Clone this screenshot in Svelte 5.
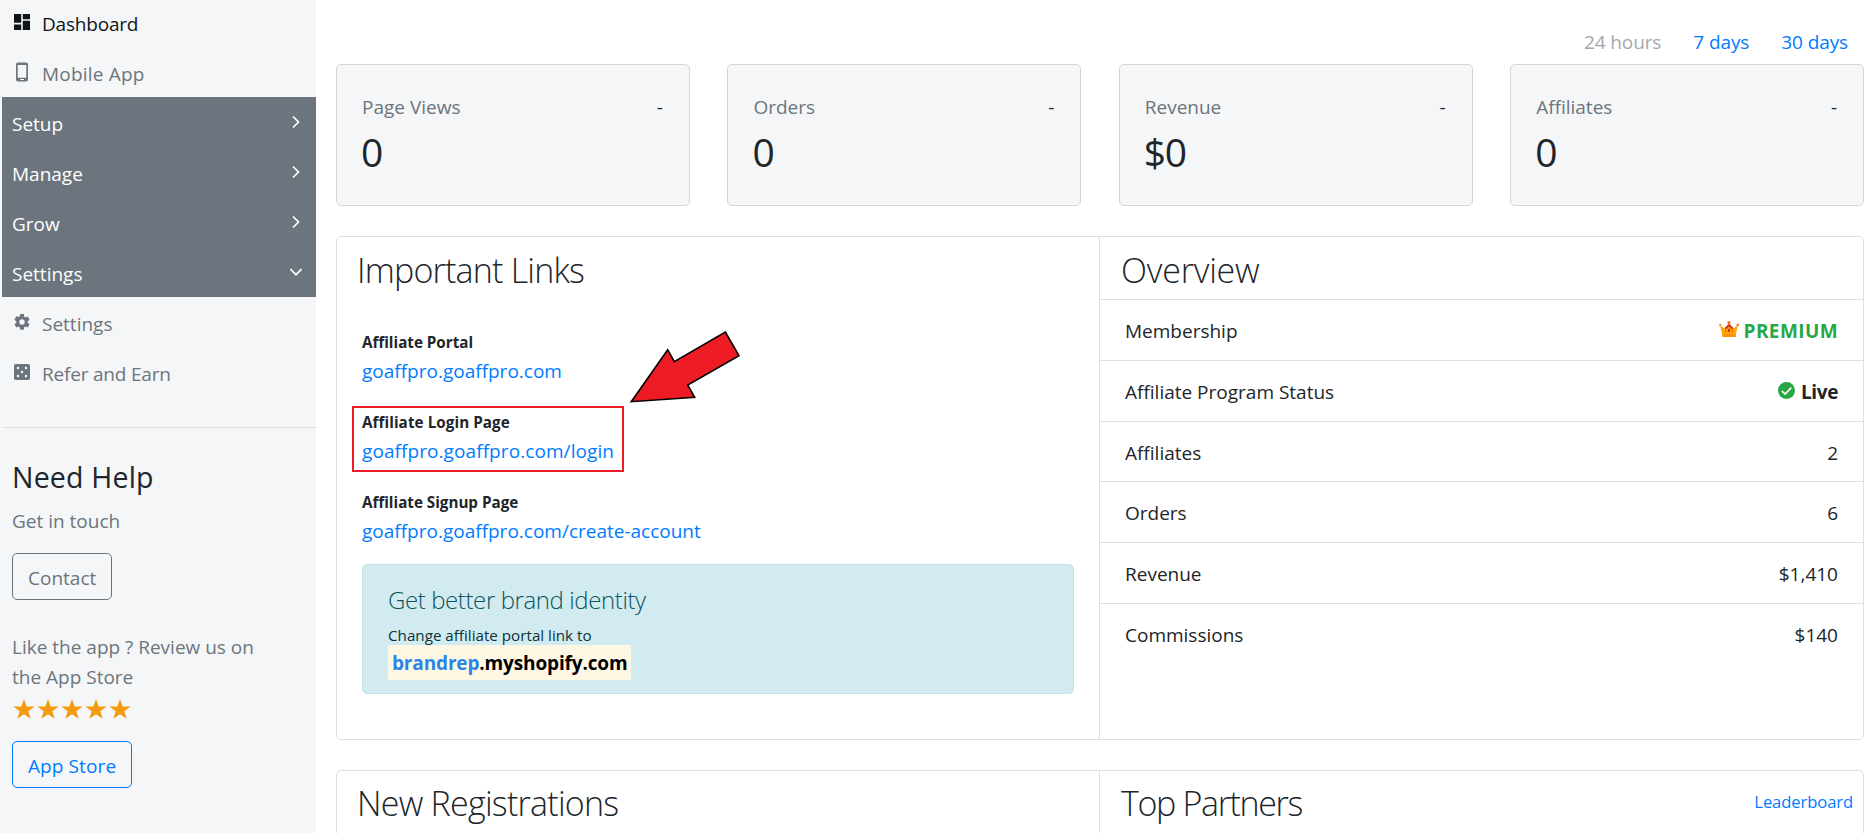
<script>
  const groups = [
    { label: 'Setup', open: false },
    { label: 'Manage', open: false },
    { label: 'Grow', open: false },
    { label: 'Settings', open: true }
  ];
  const stats = [
    { label: 'Page Views', value: '0' },
    { label: 'Orders', value: '0' },
    { label: 'Revenue', value: '$0' },
    { label: 'Affiliates', value: '0' }
  ];
  const links = [
    { title: 'Affiliate Portal', url: 'goaffpro.goaffpro.com' },
    { title: 'Affiliate Login Page', url: 'goaffpro.goaffpro.com/login', marked: true },
    { title: 'Affiliate Signup Page', url: 'goaffpro.goaffpro.com/create-account' }
  ];
  const overview = [
    { label: 'Membership', value: 'PREMIUM', kind: 'premium' },
    { label: 'Affiliate Program Status', value: 'Live', kind: 'live' },
    { label: 'Affiliates', value: '2' },
    { label: 'Orders', value: '6' },
    { label: 'Revenue', value: '$1,410' },
    { label: 'Commissions', value: '$140' }
  ];
</script>

<div class="app">
  <aside>
    <nav>
      <a class="item active" href="#dashboard">
        <svg class="icon" viewBox="0 0 16 16"><path d="M0 0h7.2v8.8H0zM8.8 0H16v5.2H8.8zM0 10.4h7.2V16H0zM8.8 6.8H16V16H8.8z" /></svg>
        <span class="tight">Dashboard</span>
      </a>
      <a class="item" href="#mobile">
        <svg class="icon phone" viewBox="0 0 16 20"><path fill-rule="evenodd" d="M4 .5h8a2 2 0 0 1 2 2v15a2 2 0 0 1-2 2H4a2 2 0 0 1-2-2v-15a2 2 0 0 1 2-2zM3.7 3v12.8h8.6V3zM6 17v1.1h4V17z" /></svg>
        <span class="wide">Mobile App</span>
      </a>
      <div class="groups">
        {#each groups as g}
          <a class="group" href="#{g.label}">
            <span>{g.label}</span>
            <svg class="chev" viewBox="0 0 14 14"><path d={g.open ? 'M1.5 4.2 7 9.8l5.5-5.6' : 'M4 1.5 9.5 7 4 12.5'} /></svg>
          </a>
        {/each}
      </div>
      <a class="item" href="#settings">
        <svg class="icon" viewBox="2 2 20 20"><path d="M19.14 12.94c.04-.3.06-.61.06-.94s-.02-.64-.07-.94l2.03-1.58a.49.49 0 0 0 .12-.61l-1.92-3.32a.488.488 0 0 0-.59-.22l-2.39.96c-.5-.38-1.03-.7-1.62-.94L14.4 2.2a.484.484 0 0 0-.48-.2h-3.84c-.24 0-.43.17-.47.41l-.36 2.54c-.59.24-1.13.57-1.62.94l-2.39-.96c-.22-.08-.47 0-.59.22L2.74 8.87c-.12.21-.08.47.12.61l2.03 1.58c-.05.3-.09.63-.09.94s.02.64.07.94l-2.03 1.58a.49.49 0 0 0-.12.61l1.92 3.32c.12.22.37.29.59.22l2.39-.96c.5.38 1.03.7 1.62.94l.36 2.54c.05.24.24.41.48.41h3.84c.24 0 .44-.17.47-.41l.36-2.54c.59-.24 1.13-.56 1.62-.94l2.39.96c.22.08.47 0 .59-.22l1.92-3.32a.49.49 0 0 0-.12-.61zM12 15.4A3.4 3.4 0 1 1 12 8.6a3.4 3.4 0 0 1 0 6.8z" /></svg>
        <span>Settings</span>
      </a>
      <a class="item" href="#refer">
        <svg class="icon" viewBox="0 0 16 16">
          <rect width="16" height="16" rx="1.8" />
          <g fill="#f4f6f8"><circle cx="4" cy="4" r="1.25" /><circle cx="12" cy="4" r="1.25" /><circle cx="8" cy="8" r="1.25" /><circle cx="4" cy="12" r="1.25" /><circle cx="12" cy="12" r="1.25" /></g>
        </svg>
        <span class="refer">Refer and Earn</span>
      </a>
    </nav>
    <section class="help">
      <h4>Need Help</h4>
      <p>Get in touch</p>
      <a class="btn" href="#contact">Contact</a>
      <p class="review">Like the app ? Review us on<br />the App Store</p>
      <div class="stars">
        {#each [1, 2, 3, 4, 5] as n (n)}
          <svg viewBox="0 0 24 20"><path d="M12 0l2.7 7.5h8l-6.4 4.7 2.4 7.6L12 15.2l-6.7 4.6 2.4-7.6L1.3 7.5h8z" /></svg>
        {/each}
      </div>
      <a class="btn blue" href="#store">App Store</a>
    </section>
  </aside>

  <main>
    <div class="ranges">
      <span>24 hours</span>
      <a href="#7">7 days</a>
      <a href="#30">30 days</a>
    </div>

    <div class="stats">
      {#each stats as s}
        <div class="stat">
          <div class="top"><span>{s.label}</span><b>-</b></div>
          <div class="num">{s.value}</div>
        </div>
      {/each}
    </div>

    <div class="panel first">
      <section class="left">
        <h2 class="h-links">Important Links</h2>
        <div class="links">
          {#each links as l}
            <div class="link" class:marked={l.marked}>
              <strong>{l.title}</strong>
              <a href="#{l.url}">{l.url}</a>
            </div>
          {/each}
          <div class="alert">
            <h5>Get better brand identity</h5>
            <small>Change affiliate portal link to</small>
            <mark><i>brandrep</i>.myshopify.com</mark>
          </div>
        </div>
        <svg class="arrow" viewBox="0 0 120 80"><path d="M99.3 6 113 29.7 61.7 59 68.7 71.3 5.3 75.7 41.7 23.7 48.3 35.7z" /></svg>
      </section>
      <section class="right">
        <h2 class="lined">Overview</h2>
        {#each overview as o}
          <div class="row">
            <span>{o.label}</span>
            <span class="val {o.kind ?? ''}">
              {#if o.kind === 'premium'}
                <svg class="crown" viewBox="0 0 20 16">
                  <path fill="#ee5a1c" d="M5 8.5 10 2l5 6.500-3 2-2-3-2 3z" />
                  <path fill="#ffa800" d="M1 4.200 6 7.800l4-2.600 4 2.600 5-3.600L16.700 14H3.300z" />
                  <path fill="#d9321a" d="M5.500 7 10 3.400 14.500 7 13 8.400 10 5.600 7 8.400z" />
                  <path fill="#ff8f0a" d="M3.300 13h13.400v3H3.300z" />
                  <circle cx="1.300" cy="4" r="1.300" fill="#ff9a2e" /><circle cx="18.700" cy="4" r="1.300" fill="#f9702a" /><circle cx="10" cy="1.600" r="1.600" fill="#f9702a" />
                  <path fill="#c8201a" d="M10 7.500l1.400 1.900-1.400 1.900-1.400-1.900z" />
                  <circle cx="6.500" cy="10.300" r=".7" fill="#d9321a" /><circle cx="13.500" cy="10.300" r=".7" fill="#d9321a" />
                </svg>
              {:else if o.kind === 'live'}
                <svg class="check" viewBox="0 0 17 17"><circle cx="8.5" cy="8.5" r="8.5" fill="#28a745" /><path d="M3.8 8.8l3.3 3.2 6.2-6.3" fill="none" stroke="#fff" stroke-width="1.7" /></svg>
              {/if}
              <span>{o.value}</span>
            </span>
          </div>
        {/each}
      </section>
    </div>

    <div class="panel second">
      <section class="left"><h2 class="h-reg">New Registrations</h2></section>
      <section class="right head">
        <h2 class="h-top">Top Partners</h2>
        <a class="board" href="#leaderboard">Leaderboard</a>
      </section>
    </div>
  </main>
</div>

<style>
  :global(body) { margin: 0; overflow: hidden; background: #fff; }
  .app {
    display: grid;
    grid-template-columns: 316px 1fr;
    height: 833px;
    overflow: hidden;
    font: 19px/30px 'Open Sans', 'Noto Sans', sans-serif;
    color: #212529;
    box-sizing: border-box;
  }
  .app :global(*) { box-sizing: border-box; }
  a { color: #007bff; text-decoration: none; }
  h2, h4, h5, p { margin: 0; font-weight: 400; }
  svg { display: block; flex: none; }

  aside { background: #f4f6f8; height: 833px; overflow: hidden; }
  nav { margin-top: -3px; padding: 0 0 30px 2px; }
  .item { display: flex; height: 50px; padding: 12px 0 8px 12px; gap: 12px; color: #6c757d; }
  .item.active { color: #111417; }
  .icon { width: 16px; height: 16px; margin-top: 5px; fill: currentColor; }
  .icon.phone { height: 20px; margin-top: 3px; }
  .tight { letter-spacing: -.2px; }
  .wide { letter-spacing: .2px; }
  .refer { letter-spacing: -.2px; }
  .groups { background: #6c757d; }
  .group { display: flex; justify-content: space-between; height: 50px; padding: 12px 13px 8px 10px; color: #fff; }
  .chev { width: 14px; height: 14px; margin-top: 6px; fill: none; stroke: #fff; stroke-width: 1.7; }

  .help { margin-left: 2px; padding: 31px 0 0 10px; border-top: 1px solid #dddfe2; color: #6c757d; }
  h4 { font-size: 28.5px; line-height: 36px; letter-spacing: .2px; color: #212529; margin-bottom: 11px; }
  .btn {
    display: block; width: fit-content; height: 47px; margin-top: 17px; padding: 9px 15px 6px;
    border: 1px solid #6c757d; border-radius: 5px; color: #6c757d;
  }
  .btn.blue { margin-top: 22px; border-color: #007bff; color: #007bff; letter-spacing: .1px; }
  .review { margin-top: 32px; }
  .stars { display: flex; margin-top: 7px; }
  .stars svg { width: 24px; height: 20px; fill: #f39c12; }

  main { padding: 27px 9px 0 20px; }
  .ranges { display: flex; justify-content: flex-end; gap: 32px; padding-right: 16px; margin-bottom: 7px; letter-spacing: -.1px; }
  .ranges span { color: #a2a8ad; }
  .stats { display: grid; grid-template-columns: repeat(4, 1fr); gap: 37.5px; }
  .stat { height: 142px; padding: 27px 26px 0 25px; background: #f4f6f8; border: 1px solid #d3d6d9; border-radius: 5px; }
  .top { display: flex; justify-content: space-between; color: #6c757d; }
  .top b { font-weight: 400; color: #212529; }
  .num { margin: 6px 0 0 -1px; font-size: 39px; line-height: 48px; letter-spacing: -1.2px; }

  .panel { display: grid; grid-template-columns: 762px 1fr; margin-top: 30px; border: 1px solid #dddfe1; border-radius: 5px; }
  .first { height: 504px; }
  .second { height: 504px; }
  .left { position: relative; }
  .right { border-left: 1px solid #dddfe1; }
  h2 { height: 63px; padding: 12px 0 0 20px; font-size: 34px; line-height: 42px; font-weight: 300; letter-spacing: -.2px; }
  .lined { padding-left: 21px; border-bottom: 1px solid #dddfe1; }
  .h-links { letter-spacing: -.8px; }
  .h-reg { letter-spacing: -.75px; }
  .h-top { padding-left: 21px; letter-spacing: -1.35px; }
  .second h2 { padding-top: 11px; }
  .links { padding: 30px 25px 0; }
  .link { position: relative; width: fit-content; height: 56px; margin-bottom: 24px; }
  .link strong { display: block; margin-bottom: 2px; font-size: 15.2px; line-height: 24px; }
  .link a { display: block; }
  .marked strong, .marked a { letter-spacing: .08px; }
  .marked::after { content: ''; box-sizing: border-box; position: absolute; left: -10px; top: -4px; width: 272px; height: 66px; border: 2px solid #ed1c24; }
  .alert { height: 130px; margin-top: -6px; padding: 20px 25px 0; background: #d1ebf0; border: 1px solid #bee5eb; border-radius: 5px; }
  h5 { margin-bottom: 8px; font-size: 24px; line-height: 30px; font-weight: 300; letter-spacing: -.4px; color: #0c5460; }
  small { display: block; font-size: 15.2px; line-height: 24px; color: #0a323a; }
  mark { display: block; width: fit-content; height: 35px; margin-top: -2px; padding: 3px 4px 0; background: #fdf7e3; color: #000; font-weight: 700; letter-spacing: -.15px; }
  mark i { font-style: normal; color: #2a84ea; }
  .arrow { position: absolute; left: 289px; top: 89px; width: 120px; height: 80px; fill: #ed1c24; stroke: #000; stroke-width: 1.6; }

  .row { display: flex; justify-content: space-between; height: 60.75px; padding: 16.2px 25px 0; border-bottom: 1px solid #dddfe1; }
  .row:last-child { border-bottom: 0; }
  .val { display: flex; }
  .premium { color: #28a745; font-weight: 700; letter-spacing: .4px; }
  .live { font-weight: 700; letter-spacing: -.4px; }
  .crown { width: 20px; height: 16px; margin: 5px 5px 0 0; }
  .check { width: 17px; height: 17px; margin: 5px 6px 0 0; }
  .head { display: flex; justify-content: space-between; align-items: flex-start; }
  .board { margin: 18px 10px 0 0; font-size: 16.6px; line-height: 26px; letter-spacing: -.1px; }
</style>
